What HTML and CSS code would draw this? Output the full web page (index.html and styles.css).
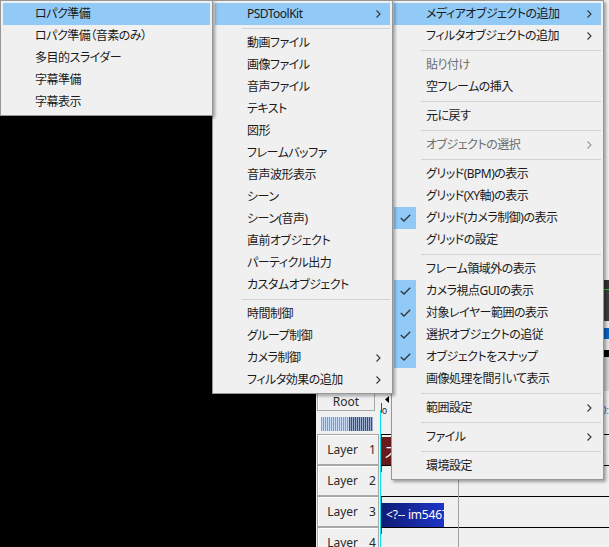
FILE: index.html
```html
<!DOCTYPE html>
<html lang="ja">
<head>
<meta charset="utf-8">
<link rel="stylesheet" href="styles.css">
</head>
<body>
<div class="desk">
  <div class="edge">
    <div class="e-light"></div>
    <div class="e-dark"></div>
    <div class="e-green"></div>
    <div class="e-dark2"></div>
    <div class="e-light2"></div>
    <div class="e-blue"></div>
    <div class="e-light3"></div>
    <div class="e-black"></div>
    <div class="e-gray"></div>
  </div>

  <div class="timeline">
    <div class="heads">
      <div class="root-btn">Root</div>
      <div class="meter"><div class="m-light"></div><div class="m-dark"></div></div>
      <div class="layer-btn"><span>Layer</span><span class="num">1</span></div>
      <div class="layer-btn"><span>Layer</span><span class="num">2</span></div>
      <div class="layer-btn"><span>Layer</span><span class="num">3</span></div>
      <div class="layer-btn"><span>Layer</span><span class="num">4</span></div>
    </div>
    <div class="lanes">
      <div class="ruler">
        <svg class="ruler-arrow" width="4" height="7" viewBox="0 0 4 7"><polygon points="4,0 0,3.5 4,7" fill="#000"/></svg>
        <span class="tick"></span>
        <span class="tc">0</span>
        <span class="tc-right">0:</span>
      </div>
      <div class="row"><div class="clip clip-red">ス</div></div>
      <div class="row"></div>
      <div class="row"><div class="clip clip-blue">&lt;?-- im5467</div></div>
      <div class="row"></div>
      <div class="vline"></div>
      <div class="cursor"></div>
    </div>
  </div>

  <div class="menu m3">
    <div class="item hl"><span class="chk"></span><span class="lbl">メディアオブジェクトの追加</span><span class="arr"><svg width="5" height="8" viewBox="0 0 5 8"><polyline points="0.5,0.5 4,4 0.5,7.5" fill="none" stroke="#333" stroke-width="1.1"/></svg></span></div>
    <div class="item"><span class="chk"></span><span class="lbl">フィルタオブジェクトの追加</span><span class="arr"><svg width="5" height="8" viewBox="0 0 5 8"><polyline points="0.5,0.5 4,4 0.5,7.5" fill="none" stroke="#333" stroke-width="1.1"/></svg></span></div>
    <div class="sep"></div>
    <div class="item dis"><span class="chk"></span><span class="lbl">貼り付け</span></div>
    <div class="item"><span class="chk"></span><span class="lbl">空フレームの挿入</span></div>
    <div class="sep"></div>
    <div class="item"><span class="chk"></span><span class="lbl">元に戻す</span></div>
    <div class="sep"></div>
    <div class="item dis"><span class="chk"></span><span class="lbl">オブジェクトの選択</span><span class="arr"><svg width="5" height="8" viewBox="0 0 5 8"><polyline points="0.5,0.5 4,4 0.5,7.5" fill="none" stroke="#999" stroke-width="1.1"/></svg></span></div>
    <div class="sep"></div>
    <div class="item"><span class="chk"></span><span class="lbl">グリッド(BPM)の表示</span></div>
    <div class="item"><span class="chk"></span><span class="lbl">グリッド(XY軸)の表示</span></div>
    <div class="item"><span class="chk on"><svg width="11" height="8" viewBox="0 0 11 8"><polyline points="0.8,4 4,7 10.2,0.8" fill="none" stroke="#333" stroke-width="1.3"/></svg></span><span class="lbl">グリッド(カメラ制御)の表示</span></div>
    <div class="item"><span class="chk"></span><span class="lbl">グリッドの設定</span></div>
    <div class="sep"></div>
    <div class="item"><span class="chk"></span><span class="lbl">フレーム領域外の表示</span></div>
    <div class="item"><span class="chk on"><svg width="11" height="8" viewBox="0 0 11 8"><polyline points="0.8,4 4,7 10.2,0.8" fill="none" stroke="#333" stroke-width="1.3"/></svg></span><span class="lbl">カメラ視点GUIの表示</span></div>
    <div class="item"><span class="chk on"><svg width="11" height="8" viewBox="0 0 11 8"><polyline points="0.8,4 4,7 10.2,0.8" fill="none" stroke="#333" stroke-width="1.3"/></svg></span><span class="lbl">対象レイヤー範囲の表示</span></div>
    <div class="item"><span class="chk on"><svg width="11" height="8" viewBox="0 0 11 8"><polyline points="0.8,4 4,7 10.2,0.8" fill="none" stroke="#333" stroke-width="1.3"/></svg></span><span class="lbl">選択オブジェクトの追従</span></div>
    <div class="item"><span class="chk on"><svg width="11" height="8" viewBox="0 0 11 8"><polyline points="0.8,4 4,7 10.2,0.8" fill="none" stroke="#333" stroke-width="1.3"/></svg></span><span class="lbl">オブジェクトをスナップ</span></div>
    <div class="item"><span class="chk"></span><span class="lbl">画像処理を間引いて表示</span></div>
    <div class="sep"></div>
    <div class="item"><span class="chk"></span><span class="lbl">範囲設定</span><span class="arr"><svg width="5" height="8" viewBox="0 0 5 8"><polyline points="0.5,0.5 4,4 0.5,7.5" fill="none" stroke="#333" stroke-width="1.1"/></svg></span></div>
    <div class="sep"></div>
    <div class="item"><span class="chk"></span><span class="lbl">ファイル</span><span class="arr"><svg width="5" height="8" viewBox="0 0 5 8"><polyline points="0.5,0.5 4,4 0.5,7.5" fill="none" stroke="#333" stroke-width="1.1"/></svg></span></div>
    <div class="sep"></div>
    <div class="item"><span class="chk"></span><span class="lbl">環境設定</span></div>
  </div>

  <div class="menu m2">
    <div class="item hl"><span class="chk"></span><span class="lbl">PSDToolKit</span><span class="arr"><svg width="5" height="8" viewBox="0 0 5 8"><polyline points="0.5,0.5 4,4 0.5,7.5" fill="none" stroke="#333" stroke-width="1.1"/></svg></span></div>
    <div class="sep"></div>
    <div class="item"><span class="chk"></span><span class="lbl">動画ファイル</span></div>
    <div class="item"><span class="chk"></span><span class="lbl">画像ファイル</span></div>
    <div class="item"><span class="chk"></span><span class="lbl">音声ファイル</span></div>
    <div class="item"><span class="chk"></span><span class="lbl">テキスト</span></div>
    <div class="item"><span class="chk"></span><span class="lbl">図形</span></div>
    <div class="item"><span class="chk"></span><span class="lbl">フレームバッファ</span></div>
    <div class="item"><span class="chk"></span><span class="lbl">音声波形表示</span></div>
    <div class="item"><span class="chk"></span><span class="lbl">シーン</span></div>
    <div class="item"><span class="chk"></span><span class="lbl">シーン(音声)</span></div>
    <div class="item"><span class="chk"></span><span class="lbl">直前オブジェクト</span></div>
    <div class="item"><span class="chk"></span><span class="lbl">パーティクル出力</span></div>
    <div class="item"><span class="chk"></span><span class="lbl">カスタムオブジェクト</span></div>
    <div class="sep"></div>
    <div class="item"><span class="chk"></span><span class="lbl">時間制御</span></div>
    <div class="item"><span class="chk"></span><span class="lbl">グループ制御</span></div>
    <div class="item"><span class="chk"></span><span class="lbl">カメラ制御</span><span class="arr"><svg width="5" height="8" viewBox="0 0 5 8"><polyline points="0.5,0.5 4,4 0.5,7.5" fill="none" stroke="#333" stroke-width="1.1"/></svg></span></div>
    <div class="item"><span class="chk"></span><span class="lbl">フィルタ効果の追加</span><span class="arr"><svg width="5" height="8" viewBox="0 0 5 8"><polyline points="0.5,0.5 4,4 0.5,7.5" fill="none" stroke="#333" stroke-width="1.1"/></svg></span></div>
  </div>

  <div class="menu m1">
    <div class="item hl"><span class="chk"></span><span class="lbl">ロパク準備</span></div>
    <div class="item"><span class="chk"></span><span class="lbl">ロパク準備（音素のみ）</span></div>
    <div class="item"><span class="chk"></span><span class="lbl">多目的スライダー</span></div>
    <div class="item"><span class="chk"></span><span class="lbl">字幕準備</span></div>
    <div class="item"><span class="chk"></span><span class="lbl">字幕表示</span></div>
  </div>
</div>
</body>
</html>
```

FILE: styles.css
```css
* { box-sizing: border-box; }
html, body { margin: 0; padding: 0; }
body {
  background: #000;
  font-family: "Noto Sans", "Noto Sans CJK JP", sans-serif;
  font-size: 12px;
  color: #000;
  overflow: hidden;
}
.desk {
  position: relative;
  width: 609px;
  height: 547px;
  background: #000;
  overflow: hidden;
}

/* strip of the window behind, visible at the right edge */
.edge {
  position: absolute;
  right: 0;
  top: 0;
  width: 6px;
  height: 420px;
  display: flex;
  flex-direction: column;
}
.edge > div { flex-shrink: 0; }
.e-light { height: 280px; background: #f0f0f0; }
.e-dark { height: 9px; background: #333; }
.e-green { height: 1px; background: #3fbf3f; }
.e-dark2 { height: 31px; background: #3c3c3c; }
.e-light2 { height: 7px; background: #e8e8e8; }
.e-blue { height: 11px; background: #0a64c8; }
.e-light3 { height: 11px; background: #e6e6e6; }
.e-black { height: 7px; background: #000; }
.edge > .e-gray { flex: 1; background: #d4d4d4; }

/* timeline window */
.timeline {
  position: absolute;
  left: 316px;
  top: 391px;
  right: 0;
  bottom: 0;
  background: #f0f0f0;
  display: flex;
  overflow: hidden;
}
.heads {
  width: 64px;
  flex-shrink: 0;
  display: flex;
  flex-direction: column;
  padding-left: 1px;
}
.heads > * { flex-shrink: 0; }
.root-btn {
  margin-top: 2px;
  width: 58px;
  height: 18px;
  border: 1px solid #a8a8a8;
  box-shadow: inset 1px 1px 0 #fff;
  background: #f0f0f0;
  text-align: center;
  line-height: 15px;
  font-family: "Noto Sans", "DejaVu Sans", sans-serif;
  font-size: 12px;
  color: #2a2a2a;
}
.meter {
  margin: 6px 0 3px 4px;
  width: 52px;
  height: 14px;
  display: flex;
}
.m-light {
  width: 28px;
  background: repeating-linear-gradient(90deg, #6e9fe6 0 1px, #c9daf3 1px 2px);
}
.m-dark {
  flex: 1;
  background: repeating-linear-gradient(90deg, #2b4f8f 0 1px, #9fb1d1 1px 2px);
}
.layer-btn {
  width: 62px;
  height: 31px;
  border: 1px solid #a8a8a8;
  box-shadow: inset 1px 1px 0 #fff;
  display: flex;
  align-items: center;
  justify-content: center;
  gap: 11px;
  padding-left: 7px;
  font-family: "Noto Sans", "DejaVu Sans", sans-serif;
  font-size: 12px;
  color: #2a2a2a;
}
.lanes {
  position: relative;
  flex: 1;
  display: flex;
  flex-direction: column;
}
.ruler {
  position: relative;
  height: 43px;
  flex-shrink: 0;
}
.ruler-arrow {
  position: absolute;
  left: 5px;
  top: 5px;
}
.tick {
  position: absolute;
  left: 1px;
  top: 12px;
  width: 1px;
  height: 10px;
  background: #e01010;
}
.tc {
  position: absolute;
  left: 2px;
  top: 16px;
  font-family: "Liberation Sans", sans-serif;
  font-size: 9px;
  line-height: 9px;
  color: #222;
}
.tc-right {
  position: absolute;
  right: 0;
  top: 14px;
  font-family: "Liberation Sans", sans-serif;
  font-size: 10px;
  color: #1060d0;
}
.row {
  position: relative;
  height: 31px;
  border-top: 1px solid #000;
  flex-shrink: 0;
}
.row::before {
  content: "";
  position: absolute;
  left: 1px;
  top: 0;
  width: 1px;
  height: 6px;
  background: #e01010;
}
.clip {
  position: absolute;
  left: 1px;
  color: #fff;
  white-space: nowrap;
  overflow: hidden;
}
.clip-red {
  top: 2px;
  width: 20px;
  height: 28px;
  background: #6b1a1c;
  padding: 5px 0 0 3px;
  font-family: "Noto Sans CJK JP", sans-serif;
  font-size: 14px;
  line-height: 18px;
}
.clip-blue {
  top: 6px;
  width: 63px;
  height: 24px;
  background: linear-gradient(90deg, #0f1c74, #1d34c8);
  padding-left: 5px;
  line-height: 24px;
  font-family: "Noto Sans", "DejaVu Sans", sans-serif;
  font-size: 12px;
  letter-spacing: -0.2px;
}
.vline {
  position: absolute;
  left: 78px;
  top: 43px;
  bottom: 0;
  width: 1px;
  background: #a0a0a0;
}
.cursor {
  position: absolute;
  left: 0;
  top: 19px;
  bottom: 0;
  width: 1px;
  background: #00e5ee;
}

/* menus */
.menu {
  position: absolute;
  top: 0;
  background: #f0f0f0;
  border: 1px solid #979797;
  padding: 2px;
  box-shadow: 2px 2px 3px rgba(0, 0, 0, 0.35);
  display: flex;
  flex-direction: column;
  color: #1a1a1a;
  font-feature-settings: "palt";
}
.m1 { left: 0; width: 213px; z-index: 3; }
.m2 { left: 212px; width: 181px; z-index: 2; }
.m3 { left: 391px; width: 213px; z-index: 1; }

.item {
  height: 22px;
  display: flex;
  align-items: center;
  white-space: nowrap;
  flex-shrink: 0;
}
.item.hl { background: #91c9f7; }
.item.dis { color: #6d6d6d; }
.chk {
  width: 22px;
  height: 22px;
  flex-shrink: 0;
  display: flex;
  align-items: center;
  justify-content: center;
}
.chk.on { background: #91c9f7; }
.lbl {
  flex: 1;
  margin-left: 10px;
  line-height: 22px;
  padding-bottom: 1px;
  letter-spacing: -0.5px;
}
.arr {
  width: 5px;
  margin-right: 9px;
  display: flex;
  align-items: center;
}
.sep {
  height: 7px;
  flex-shrink: 0;
  position: relative;
}
.sep::after {
  content: "";
  position: absolute;
  left: 27px;
  right: 0;
  top: 3px;
  height: 1px;
  background: #d2d2d2;
}
```
